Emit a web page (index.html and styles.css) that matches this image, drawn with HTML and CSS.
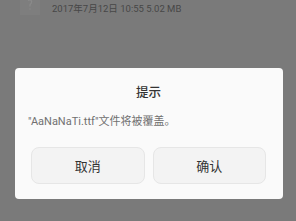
FILE: index.html
```html
<!DOCTYPE html>
<html lang="zh">
<head>
<meta charset="utf-8">
<link rel="stylesheet" href="styles.css">
</head>
<body>
<div class="file-row">
  <div class="file-icon">
    <svg width="20" height="16" viewBox="0 0 20 16"><path d="M8 0.5 Q10.5 -1 11.5 1 Q12 3 10 4.5 L10 6.5" fill="none" stroke="#8a8a8a" stroke-width="1.2"/><circle cx="10" cy="9" r="0.8" fill="#8a8a8a"/></svg>
  </div>
  <div class="file-meta">2017年7月12日 10:55 5.02 MB</div>
</div>
<div class="dialog">
  <div class="dialog-title">提示</div>
  <div class="dialog-msg">"AaNaNaTi.ttf"文件将被覆盖。</div>
  <div class="dialog-actions">
    <button class="btn">取消</button>
    <button class="btn">确认</button>
  </div>
</div>
</body>
</html>
```
FILE: styles.css
```css
html, body {
  margin: 0;
  padding: 0;
}
body {
  background: #7a7a7a;
  width: 296px;
  height: 221px;
  overflow: hidden;
  font-family: Roboto, "Noto Sans CJK SC", sans-serif;
}
.file-row {
  display: flex;
  align-items: flex-start;
  height: 68px;
}
.file-icon {
  width: 20px;
  height: 15px;
  margin-left: 20px;
  background: #7e7e7e;
}
.file-icon svg {
  display: block;
}
.file-meta {
  margin-left: 12px;
  margin-top: 3px;
  font-size: 9.5px;
  line-height: 12px;
  color: #474747;
}
.dialog {
  width: 268px;
  margin-left: 15px;
  background: #fafafa;
  border-radius: 4px;
  padding: 17px 17px 15px 16px;
  box-sizing: border-box;
}
.dialog-title {
  text-align: center;
  font-size: 12.5px;
  line-height: 16px;
  color: #333;
  font-weight: 500;
}
.dialog-msg {
  margin-top: 13px;
  margin-left: -3px;
  font-size: 11px;
  line-height: 16px;
  color: #707070;
}
.dialog-actions {
  display: grid;
  grid-template-columns: 1fr 1fr;
  gap: 8px;
  margin-top: 17px;
}
.btn {
  height: 37px;
  border: 1px solid #e6e6e6;
  border-radius: 8px;
  background: #f3f3f3;
  font-family: Roboto, "Noto Sans CJK SC", sans-serif;
  font-size: 13px;
  color: #333;
  padding: 0;
}
```
